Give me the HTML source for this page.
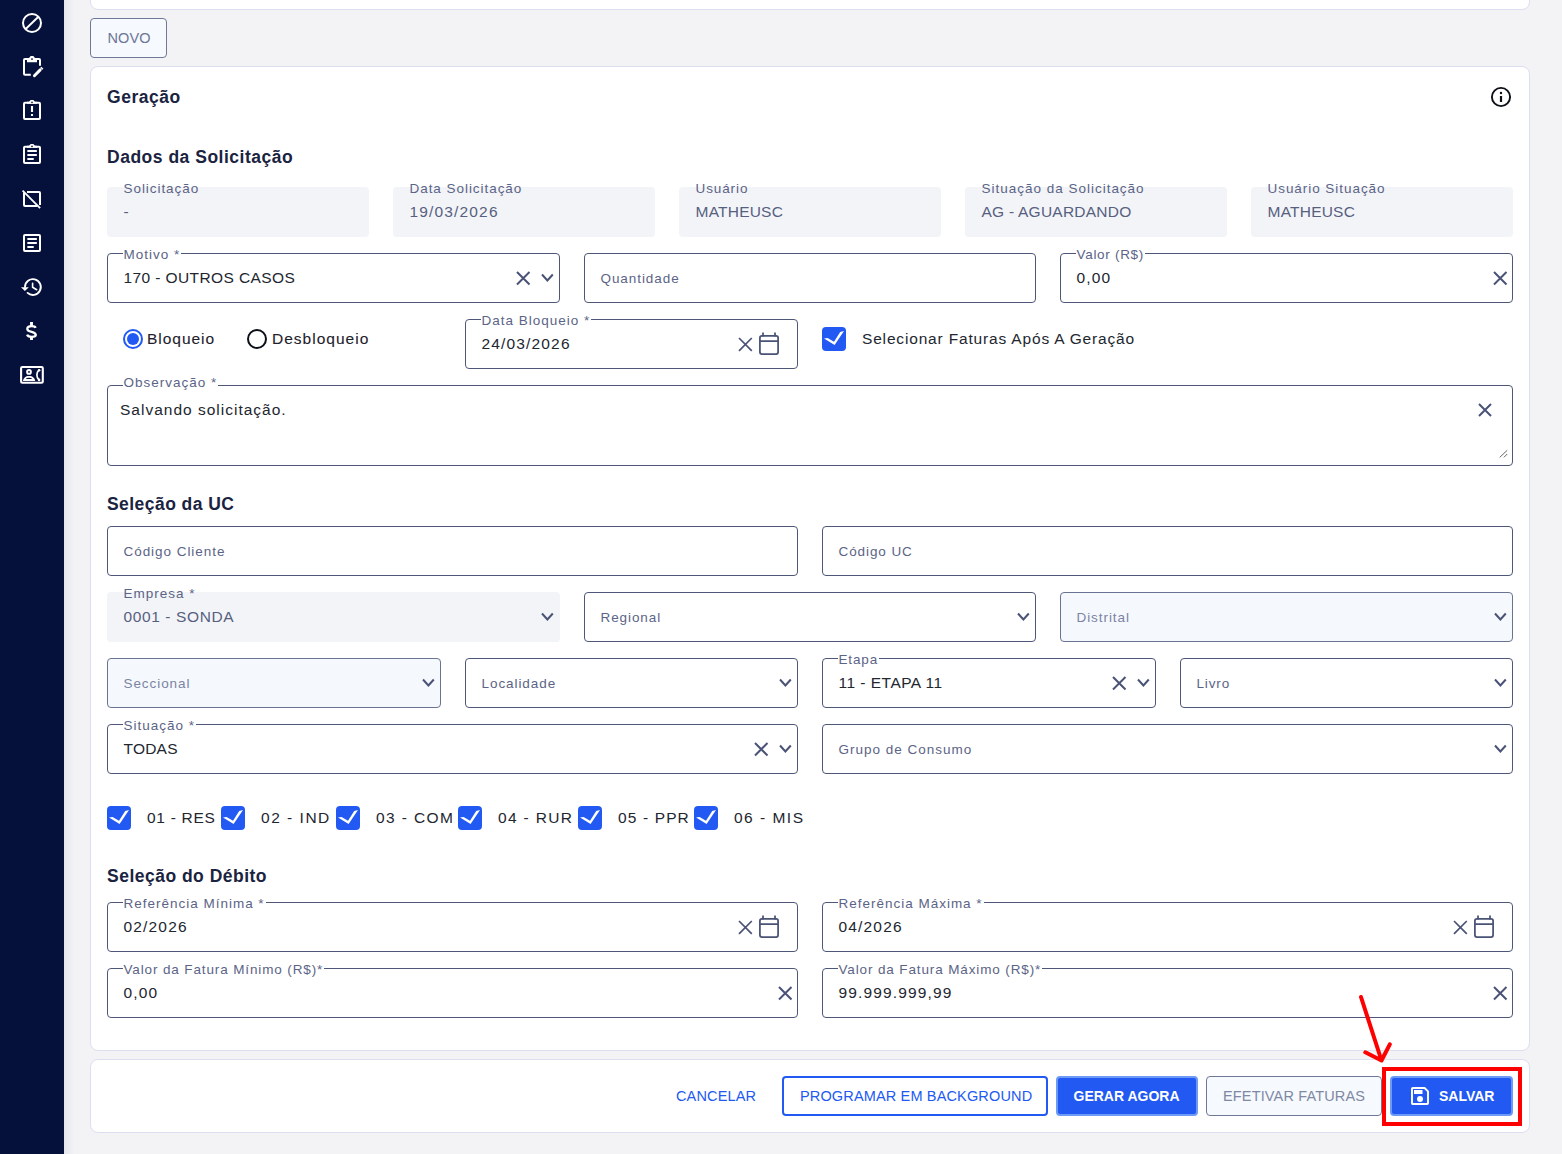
<!DOCTYPE html><html><head><meta charset="utf-8"><style>
*{margin:0;padding:0;box-sizing:border-box}
html,body{width:1562px;height:1154px;overflow:hidden;background:#f3f3f5;font-family:"Liberation Sans",sans-serif}
.abs{position:absolute}
.t{position:absolute;line-height:20px;white-space:nowrap}
.side{position:absolute;left:0;top:0;width:64px;height:1154px;background:#06113b}
.shadow{position:absolute;left:64px;top:0;width:10px;height:1154px;background:linear-gradient(90deg,#e4e6ec,#f3f3f5)}
.card{position:absolute;background:#fff;border:1px solid #dcdff0;border-radius:8px}
.box{position:absolute;border:1px solid #4f5779;border-radius:4px;background:#fff}
.ro{position:absolute;background:#f3f4f8;border-radius:4px}
.btn{position:absolute;border-radius:4px}
</style></head><body>

<div class="shadow"></div><div class="side">
<svg class="abs" style="left:20px;top:11px" width="24" height="24" viewBox="0 0 24 24"><circle cx="12" cy="12" r="9" stroke="#ffffff" stroke-width="2" fill="none"/><path d="M5.4 18.2L18.4 5.8" stroke="#ffffff" stroke-width="1.9"/></svg>
<svg class="abs" style="left:20px;top:54px" width="24" height="24" viewBox="0 0 24 24"><path d="M10.8 20.8H5A1 1 0 0 1 4 19.8V5.9A1 1 0 0 1 5 4.9H7.2M16.8 4.9H19A1 1 0 0 1 20 5.9V11.8" stroke="#ffffff" stroke-width="2" fill="none"/><path d="M7 4H9L10.7 2.1H13.3L15 4H17V8.2H7Z" fill="#ffffff"/><circle cx="12" cy="5.1" r="0.9" fill="#06113b"/><path d="M14.4 21.7L20.2 15.9" stroke="#ffffff" stroke-width="2.9" stroke-linecap="round"/><path d="M21.3 14.8L22.4 13.7" stroke="#ffffff" stroke-width="2.9"/></svg>
<svg class="abs" style="left:20px;top:98px" width="24" height="24" viewBox="0 0 24 24"><rect x="4" y="4.8" width="16" height="16.2" rx="1" stroke="#ffffff" stroke-width="2" fill="none"/><path d="M7 3.8H9L10.7 2H13.3L15 3.8H17V5.8H7Z" fill="#ffffff"/><circle cx="12" cy="4.4" r="0.8" fill="#06113b"/><path d="M12 8V14.1M12 16V18.1" stroke="#ffffff" stroke-width="2.1"/></svg>
<svg class="abs" style="left:20px;top:142px" width="24" height="24" viewBox="0 0 24 24"><rect x="4" y="4.8" width="16" height="16.2" rx="1" stroke="#ffffff" stroke-width="2" fill="none"/><path d="M7 3.8H9L10.7 2H13.3L15 3.8H17V5.8H7Z" fill="#ffffff"/><circle cx="12" cy="4.4" r="0.8" fill="#06113b"/><path d="M8.1 8.9H16.1M8.1 12.9H16.1M8.1 17H13" stroke="#ffffff" stroke-width="2" stroke-linecap="round"/></svg>
<svg class="abs" style="left:20px;top:187px" width="24" height="24" viewBox="0 0 24 24"><path d="M7 4.9H19A1 1 0 0 1 20 5.9V18.1M4 5.6V18A1 1 0 0 0 5 19H17.4" stroke="#ffffff" stroke-width="2" fill="none"/><path d="M2.6 3.6L20.1 21.2" stroke="#ffffff" stroke-width="1.9"/></svg>
<svg class="abs" style="left:20px;top:231px" width="24" height="24" viewBox="0 0 24 24"><rect x="4" y="4" width="16" height="15.9" rx="1" stroke="#ffffff" stroke-width="2" fill="none"/><path d="M8.1 8H16.1M8.1 12H16.1M8.1 16H13" stroke="#ffffff" stroke-width="2" stroke-linecap="round"/></svg>
<svg class="abs" style="left:20px;top:275px" width="24" height="24" viewBox="0 0 24 24"><path d="M5 12A7.9 7.9 0 1 1 7.6 17.9" stroke="#ffffff" stroke-width="1.9" fill="none" stroke-linecap="round"/><path d="M1 12.3H8.8L4.9 16Z" fill="#ffffff"/><path d="M12.6 8.2V12.3L16.7 14.7" stroke="#ffffff" stroke-width="1.6" fill="none" stroke-linecap="round"/></svg>
<svg class="abs" style="left:20px;top:319px" width="24" height="24" viewBox="0 0 24 24"><path d="M15.6 8.8C15.1 7.5 13.7 7.1 11.5 7.1C9.1 7.1 7.3 8.2 7.3 9.9C7.3 11.8 9.3 12.3 11.7 12.9C14.2 13.5 15.8 14.3 15.8 16.1C15.8 17.7 14 17.9 11.5 17.9C9.2 17.9 7.6 17.2 7.1 15.7" stroke="#ffffff" stroke-width="2.3" fill="none"/><path d="M11.5 2.9V7M11.5 17.9V20.9" stroke="#ffffff" stroke-width="2.9"/></svg>
<svg class="abs" style="left:19px;top:364px" width="26" height="22" viewBox="0 0 26 22"><rect x="2.1" y="3" width="21.7" height="15.8" rx="1.2" stroke="#ffffff" stroke-width="2.1" fill="none"/><circle cx="10" cy="7.9" r="1.9" stroke="#ffffff" stroke-width="1.9" fill="none"/><path d="M4 17.1C4.2 13.9 6.6 11.9 10.1 11.9C13.6 11.9 16 13.9 16.2 17.1Z" fill="#ffffff"/><ellipse cx="10" cy="14.4" rx="3" ry="0.7" fill="#06113b"/><path d="M20 6.2C18.6 7.4 17.9 9 17.9 11.1C17.9 13.2 18.6 14.8 20 16" stroke="#ffffff" stroke-width="1.7" fill="none"/><circle cx="20.1" cy="6.3" r="1.3" fill="#ffffff"/><circle cx="20.1" cy="15.9" r="1.3" fill="#ffffff"/></svg>
</div>
<div class="card" style="left:90px;top:-20px;width:1440px;height:30px"></div>
<div class="btn" style="left:90px;top:18px;width:77px;height:40px;border:1px solid #707898;background:#f6f9fd"></div>
<div class="t" style="left:107.5px;top:28px;font-size:14.5px;font-weight:normal;color:#6c7596;letter-spacing:0.10px;">NOVO</div>
<div class="card" style="left:90px;top:66px;width:1440px;height:985px"></div>
<div class="t" style="left:107px;top:87px;font-size:17.5px;font-weight:bold;color:#1a2340;letter-spacing:0.53px;">Geração</div>
<svg class="abs" style="left:1489px;top:85px" width="24" height="24" viewBox="0 0 24 24"><circle cx="12" cy="12" r="9.1" stroke="#0b0f17" stroke-width="1.9" fill="none"/><path d="M12 11V17" stroke="#0b0f17" stroke-width="2.2"/><circle cx="12" cy="8" r="1.2" fill="#0b0f17"/></svg>
<div class="t" style="left:107px;top:147px;font-size:17.5px;font-weight:bold;color:#1a2340;letter-spacing:0.51px;">Dados da Solicitação</div>
<div class="ro" style="left:107px;top:187px;width:262px;height:50px"></div>
<div class="t" style="left:123.5px;top:179px;font-size:13.5px;font-weight:normal;color:#5b6486;letter-spacing:0.94px;">Solicitação</div>
<div class="t" style="left:123.5px;top:202px;font-size:15.5px;font-weight:normal;color:#575f80;letter-spacing:0.00px;">-</div>
<div class="ro" style="left:393px;top:187px;width:262px;height:50px"></div>
<div class="t" style="left:409.5px;top:179px;font-size:13.5px;font-weight:normal;color:#5b6486;letter-spacing:0.95px;">Data Solicitação</div>
<div class="t" style="left:409.5px;top:202px;font-size:15.5px;font-weight:normal;color:#575f80;letter-spacing:1.16px;">19/03/2026</div>
<div class="ro" style="left:679px;top:187px;width:262px;height:50px"></div>
<div class="t" style="left:695.5px;top:179px;font-size:13.5px;font-weight:normal;color:#5b6486;letter-spacing:0.90px;">Usuário</div>
<div class="t" style="left:695.5px;top:202px;font-size:15.5px;font-weight:normal;color:#575f80;letter-spacing:0.22px;">MATHEUSC</div>
<div class="ro" style="left:965px;top:187px;width:262px;height:50px"></div>
<div class="t" style="left:981.5px;top:179px;font-size:13.5px;font-weight:normal;color:#5b6486;letter-spacing:0.99px;">Situação da Solicitação</div>
<div class="t" style="left:981.5px;top:202px;font-size:15.5px;font-weight:normal;color:#575f80;letter-spacing:0.24px;">AG - AGUARDANDO</div>
<div class="ro" style="left:1251px;top:187px;width:262px;height:50px"></div>
<div class="t" style="left:1267.5px;top:179px;font-size:13.5px;font-weight:normal;color:#5b6486;letter-spacing:0.95px;">Usuário Situação</div>
<div class="t" style="left:1267.5px;top:202px;font-size:15.5px;font-weight:normal;color:#575f80;letter-spacing:0.22px;">MATHEUSC</div>
<div class="box" style="left:107px;top:253px;width:453px;height:50px;"></div>
<div class="t" style="left:123.5px;top:245px;font-size:13.5px;font-weight:normal;color:#5b6486;letter-spacing:0.99px;background:#fff;padding:0 1px;margin-left:-1px;">Motivo *</div>
<div class="t" style="left:123.5px;top:268px;font-size:15.5px;font-weight:normal;color:#22262f;letter-spacing:0.40px;">170 - OUTROS CASOS</div>
<svg class="abs" style="left:514.75px;top:269.75px" width="16.5" height="16.5" viewBox="-8.25 -8.25 16.5 16.5"><path d="M-6.25 -6.25L6.25 6.25M6.25 -6.25L-6.25 6.25" stroke="#4a5376" stroke-width="2" fill="none"/></svg>
<svg class="abs" style="left:539.6px;top:272px" width="14.8" height="12" viewBox="-7.4 -6 14.8 12"><path d="M-5.4 -3.5L0 2.5L5.4 -3.5" stroke="#4a5376" stroke-width="2" fill="none"/></svg>
<div class="box" style="left:584px;top:253px;width:452px;height:50px;"></div>
<div class="t" style="left:600.5px;top:269px;font-size:13.5px;font-weight:normal;color:#5b6486;letter-spacing:0.93px;">Quantidade</div>
<div class="box" style="left:1060px;top:253px;width:453px;height:50px;"></div>
<div class="t" style="left:1076.5px;top:245px;font-size:13.5px;font-weight:normal;color:#5b6486;letter-spacing:0.70px;background:#fff;padding:0 1px;margin-left:-1px;">Valor (R$)</div>
<div class="t" style="left:1076.5px;top:268px;font-size:15.5px;font-weight:normal;color:#22262f;letter-spacing:1.13px;">0,00</div>
<svg class="abs" style="left:1491.75px;top:269.75px" width="16.5" height="16.5" viewBox="-8.25 -8.25 16.5 16.5"><path d="M-6.25 -6.25L6.25 6.25M6.25 -6.25L-6.25 6.25" stroke="#4a5376" stroke-width="2" fill="none"/></svg>
<svg class="abs" style="left:122px;top:328px" width="22" height="22" viewBox="0 0 22 22"><circle cx="11" cy="11" r="9" stroke="#2159f2" stroke-width="2" fill="#fff"/><circle cx="11" cy="11" r="6" fill="#2159f2"/></svg>
<div class="t" style="left:147px;top:329px;font-size:15.5px;font-weight:normal;color:#1d212b;letter-spacing:0.97px;-webkit-text-stroke:0.1px #1d212b">Bloqueio</div>
<svg class="abs" style="left:246px;top:328px" width="22" height="22" viewBox="0 0 22 22"><circle cx="11" cy="11" r="9" stroke="#0b0f17" stroke-width="2" fill="#fff"/></svg>
<div class="t" style="left:272px;top:329px;font-size:15.5px;font-weight:normal;color:#1d212b;letter-spacing:1.01px;-webkit-text-stroke:0.1px #1d212b">Desbloqueio</div>
<div class="box" style="left:465px;top:319px;width:333px;height:50px;"></div>
<div class="t" style="left:481.5px;top:311px;font-size:13.5px;font-weight:normal;color:#5b6486;letter-spacing:0.99px;background:#fff;padding:0 1px;margin-left:-1px;">Data Bloqueio *</div>
<div class="t" style="left:481.5px;top:334px;font-size:15.5px;font-weight:normal;color:#22262f;letter-spacing:1.16px;">24/03/2026</div>
<svg class="abs" style="left:736.6px;top:335.6px" width="16.8" height="16.8" viewBox="-8.4 -8.4 16.8 16.8"><path d="M-6.4 -6.4L6.4 6.4M6.4 -6.4L-6.4 6.4" stroke="#4a5376" stroke-width="1.7" fill="none"/></svg>
<svg class="abs" style="left:759px;top:332px" width="21" height="24" viewBox="0 0 21 24"><rect x="0.9" y="3.9" width="18.2" height="18.2" rx="2" stroke="#4a5376" stroke-width="1.75" fill="none"/><path d="M1 9H19M4 0.5V4.5M16 0.5V4.5" stroke="#4a5376" stroke-width="1.75" fill="none"/></svg>
<svg class="abs" style="left:822px;top:327px" width="24" height="24" viewBox="0 0 24 24"><rect x="0" y="0" width="24" height="24" rx="4" fill="#2159f2"/><path d="M2 11.4L5.6 11L12 14.8L18.2 5L22 4.1L12.6 18.1Z" fill="#fff"/></svg>
<div class="t" style="left:862px;top:329px;font-size:15.5px;font-weight:normal;color:#22262f;letter-spacing:0.83px;">Selecionar Faturas Após A Geração</div>
<div class="box" style="left:107px;top:385px;width:1406px;height:81px;"></div>
<div class="t" style="left:123.5px;top:373px;font-size:13.5px;font-weight:normal;color:#5b6486;letter-spacing:0.99px;background:#fff;padding:0 1px;margin-left:-1px;">Observação *</div>
<div class="t" style="left:120px;top:400px;font-size:15.5px;font-weight:normal;color:#22262f;letter-spacing:1.00px;">Salvando solicitação.</div>
<svg class="abs" style="left:1477.0px;top:402.0px" width="16" height="16" viewBox="-8.0 -8.0 16 16"><path d="M-6.0 -6.0L6.0 6.0M6.0 -6.0L-6.0 6.0" stroke="#4a5376" stroke-width="2" fill="none"/></svg>
<svg class="abs" style="left:1496px;top:448px" width="13" height="13" viewBox="0 0 13 13"><path d="M3.7 9.4L11.2 2.3M7.9 9.4L11.2 6" stroke="#666" stroke-width="1"/></svg>
<div class="t" style="left:107px;top:494px;font-size:17.5px;font-weight:bold;color:#1a2340;letter-spacing:0.45px;">Seleção da UC</div>
<div class="box" style="left:107px;top:526px;width:691px;height:50px;"></div>
<div class="t" style="left:123.5px;top:542px;font-size:13.5px;font-weight:normal;color:#5b6486;letter-spacing:0.95px;">Código Cliente</div>
<div class="box" style="left:822px;top:526px;width:691px;height:50px;"></div>
<div class="t" style="left:838.5px;top:542px;font-size:13.5px;font-weight:normal;color:#5b6486;letter-spacing:0.91px;">Código UC</div>
<div class="ro" style="left:107px;top:592px;width:453px;height:50px"></div>
<div class="t" style="left:123.5px;top:584px;font-size:13.5px;font-weight:normal;color:#5b6486;letter-spacing:0.99px;">Empresa *</div>
<div class="t" style="left:123.5px;top:607px;font-size:15.5px;font-weight:normal;color:#575f80;letter-spacing:0.61px;">0001 - SONDA</div>
<svg class="abs" style="left:539.6px;top:611px" width="14.8" height="12" viewBox="-7.4 -6 14.8 12"><path d="M-5.4 -3.5L0 2.5L5.4 -3.5" stroke="#4a5376" stroke-width="2" fill="none"/></svg>
<div class="box" style="left:584px;top:592px;width:452px;height:50px;"></div>
<div class="t" style="left:600.5px;top:608px;font-size:13.5px;font-weight:normal;color:#5b6486;letter-spacing:0.91px;">Regional</div>
<svg class="abs" style="left:1015.6px;top:611px" width="14.8" height="12" viewBox="-7.4 -6 14.8 12"><path d="M-5.4 -3.5L0 2.5L5.4 -3.5" stroke="#4a5376" stroke-width="2" fill="none"/></svg>
<div class="box" style="left:1060px;top:592px;width:453px;height:50px;background:#f5f8fd;border-color:#6b7392;"></div>
<div class="t" style="left:1076.5px;top:608px;font-size:13.5px;font-weight:normal;color:#7b84a3;letter-spacing:0.93px;">Distrital</div>
<svg class="abs" style="left:1492.6px;top:611px" width="14.8" height="12" viewBox="-7.4 -6 14.8 12"><path d="M-5.4 -3.5L0 2.5L5.4 -3.5" stroke="#4a5376" stroke-width="2" fill="none"/></svg>
<div class="box" style="left:107px;top:658px;width:334px;height:50px;background:#f5f8fd;border-color:#6b7392;"></div>
<div class="t" style="left:123.5px;top:674px;font-size:13.5px;font-weight:normal;color:#7b84a3;letter-spacing:0.93px;">Seccional</div>
<svg class="abs" style="left:420.6px;top:677px" width="14.8" height="12" viewBox="-7.4 -6 14.8 12"><path d="M-5.4 -3.5L0 2.5L5.4 -3.5" stroke="#4a5376" stroke-width="2" fill="none"/></svg>
<div class="box" style="left:465px;top:658px;width:333px;height:50px;"></div>
<div class="t" style="left:481.5px;top:674px;font-size:13.5px;font-weight:normal;color:#5b6486;letter-spacing:0.93px;">Localidade</div>
<svg class="abs" style="left:777.6px;top:677px" width="14.8" height="12" viewBox="-7.4 -6 14.8 12"><path d="M-5.4 -3.5L0 2.5L5.4 -3.5" stroke="#4a5376" stroke-width="2" fill="none"/></svg>
<div class="box" style="left:822px;top:658px;width:334px;height:50px;"></div>
<div class="t" style="left:838.5px;top:650px;font-size:13.5px;font-weight:normal;color:#5b6486;letter-spacing:0.85px;background:#fff;padding:0 1px;margin-left:-1px;">Etapa</div>
<div class="t" style="left:838.5px;top:673px;font-size:15.5px;font-weight:normal;color:#22262f;letter-spacing:0.48px;">11 - ETAPA 11</div>
<svg class="abs" style="left:1110.75px;top:674.75px" width="16.5" height="16.5" viewBox="-8.25 -8.25 16.5 16.5"><path d="M-6.25 -6.25L6.25 6.25M6.25 -6.25L-6.25 6.25" stroke="#4a5376" stroke-width="2" fill="none"/></svg>
<svg class="abs" style="left:1135.6px;top:677px" width="14.8" height="12" viewBox="-7.4 -6 14.8 12"><path d="M-5.4 -3.5L0 2.5L5.4 -3.5" stroke="#4a5376" stroke-width="2" fill="none"/></svg>
<div class="box" style="left:1180px;top:658px;width:333px;height:50px;"></div>
<div class="t" style="left:1196.5px;top:674px;font-size:13.5px;font-weight:normal;color:#5b6486;letter-spacing:0.85px;">Livro</div>
<svg class="abs" style="left:1492.6px;top:677px" width="14.8" height="12" viewBox="-7.4 -6 14.8 12"><path d="M-5.4 -3.5L0 2.5L5.4 -3.5" stroke="#4a5376" stroke-width="2" fill="none"/></svg>
<div class="box" style="left:107px;top:724px;width:691px;height:50px;"></div>
<div class="t" style="left:123.5px;top:716px;font-size:13.5px;font-weight:normal;color:#5b6486;letter-spacing:0.99px;background:#fff;padding:0 1px;margin-left:-1px;">Situação *</div>
<div class="t" style="left:123.5px;top:739px;font-size:15.5px;font-weight:normal;color:#22262f;letter-spacing:0.22px;">TODAS</div>
<svg class="abs" style="left:752.75px;top:740.75px" width="16.5" height="16.5" viewBox="-8.25 -8.25 16.5 16.5"><path d="M-6.25 -6.25L6.25 6.25M6.25 -6.25L-6.25 6.25" stroke="#4a5376" stroke-width="2" fill="none"/></svg>
<svg class="abs" style="left:777.6px;top:743px" width="14.8" height="12" viewBox="-7.4 -6 14.8 12"><path d="M-5.4 -3.5L0 2.5L5.4 -3.5" stroke="#4a5376" stroke-width="2" fill="none"/></svg>
<div class="box" style="left:822px;top:724px;width:691px;height:50px;"></div>
<div class="t" style="left:838.5px;top:740px;font-size:13.5px;font-weight:normal;color:#5b6486;letter-spacing:0.99px;">Grupo de Consumo</div>
<svg class="abs" style="left:1492.6px;top:743px" width="14.8" height="12" viewBox="-7.4 -6 14.8 12"><path d="M-5.4 -3.5L0 2.5L5.4 -3.5" stroke="#4a5376" stroke-width="2" fill="none"/></svg>
<svg class="abs" style="left:107px;top:806px" width="24" height="24" viewBox="0 0 24 24"><rect x="0" y="0" width="24" height="24" rx="4" fill="#2159f2"/><path d="M2 11.4L5.6 11L12 14.8L18.2 5L22 4.1L12.6 18.1Z" fill="#fff"/></svg>
<div class="t" style="left:147px;top:808px;font-size:15.5px;font-weight:normal;color:#22262f;letter-spacing:0.72px;">01 - RES</div>
<svg class="abs" style="left:221px;top:806px" width="24" height="24" viewBox="0 0 24 24"><rect x="0" y="0" width="24" height="24" rx="4" fill="#2159f2"/><path d="M2 11.4L5.6 11L12 14.8L18.2 5L22 4.1L12.6 18.1Z" fill="#fff"/></svg>
<div class="t" style="left:261px;top:808px;font-size:15.5px;font-weight:normal;color:#22262f;letter-spacing:1.51px;">02 - IND</div>
<svg class="abs" style="left:336px;top:806px" width="24" height="24" viewBox="0 0 24 24"><rect x="0" y="0" width="24" height="24" rx="4" fill="#2159f2"/><path d="M2 11.4L5.6 11L12 14.8L18.2 5L22 4.1L12.6 18.1Z" fill="#fff"/></svg>
<div class="t" style="left:376px;top:808px;font-size:15.5px;font-weight:normal;color:#22262f;letter-spacing:1.39px;">03 - COM</div>
<svg class="abs" style="left:458px;top:806px" width="24" height="24" viewBox="0 0 24 24"><rect x="0" y="0" width="24" height="24" rx="4" fill="#2159f2"/><path d="M2 11.4L5.6 11L12 14.8L18.2 5L22 4.1L12.6 18.1Z" fill="#fff"/></svg>
<div class="t" style="left:498px;top:808px;font-size:15.5px;font-weight:normal;color:#22262f;letter-spacing:1.33px;">04 - RUR</div>
<svg class="abs" style="left:578px;top:806px" width="24" height="24" viewBox="0 0 24 24"><rect x="0" y="0" width="24" height="24" rx="4" fill="#2159f2"/><path d="M2 11.4L5.6 11L12 14.8L18.2 5L22 4.1L12.6 18.1Z" fill="#fff"/></svg>
<div class="t" style="left:618px;top:808px;font-size:15.5px;font-weight:normal;color:#22262f;letter-spacing:1.13px;">05 - PPR</div>
<svg class="abs" style="left:694px;top:806px" width="24" height="24" viewBox="0 0 24 24"><rect x="0" y="0" width="24" height="24" rx="4" fill="#2159f2"/><path d="M2 11.4L5.6 11L12 14.8L18.2 5L22 4.1L12.6 18.1Z" fill="#fff"/></svg>
<div class="t" style="left:734px;top:808px;font-size:15.5px;font-weight:normal;color:#22262f;letter-spacing:1.49px;">06 - MIS</div>
<div class="t" style="left:107px;top:866px;font-size:17.5px;font-weight:bold;color:#1a2340;letter-spacing:0.49px;">Seleção do Débito</div>
<div class="box" style="left:107px;top:902px;width:691px;height:50px;"></div>
<div class="t" style="left:123.5px;top:894px;font-size:13.5px;font-weight:normal;color:#5b6486;letter-spacing:0.99px;background:#fff;padding:0 1px;margin-left:-1px;">Referência Mínima *</div>
<div class="t" style="left:123.5px;top:917px;font-size:15.5px;font-weight:normal;color:#22262f;letter-spacing:1.17px;">02/2026</div>
<svg class="abs" style="left:736.6px;top:918.6px" width="16.8" height="16.8" viewBox="-8.4 -8.4 16.8 16.8"><path d="M-6.4 -6.4L6.4 6.4M6.4 -6.4L-6.4 6.4" stroke="#4a5376" stroke-width="1.7" fill="none"/></svg>
<svg class="abs" style="left:759px;top:915px" width="21" height="24" viewBox="0 0 21 24"><rect x="0.9" y="3.9" width="18.2" height="18.2" rx="2" stroke="#4a5376" stroke-width="1.75" fill="none"/><path d="M1 9H19M4 0.5V4.5M16 0.5V4.5" stroke="#4a5376" stroke-width="1.75" fill="none"/></svg>
<div class="box" style="left:822px;top:902px;width:691px;height:50px;"></div>
<div class="t" style="left:838.5px;top:894px;font-size:13.5px;font-weight:normal;color:#5b6486;letter-spacing:0.99px;background:#fff;padding:0 1px;margin-left:-1px;">Referência Máxima *</div>
<div class="t" style="left:838.5px;top:917px;font-size:15.5px;font-weight:normal;color:#22262f;letter-spacing:1.17px;">04/2026</div>
<svg class="abs" style="left:1451.6px;top:918.6px" width="16.8" height="16.8" viewBox="-8.4 -8.4 16.8 16.8"><path d="M-6.4 -6.4L6.4 6.4M6.4 -6.4L-6.4 6.4" stroke="#4a5376" stroke-width="1.7" fill="none"/></svg>
<svg class="abs" style="left:1474px;top:915px" width="21" height="24" viewBox="0 0 21 24"><rect x="0.9" y="3.9" width="18.2" height="18.2" rx="2" stroke="#4a5376" stroke-width="1.75" fill="none"/><path d="M1 9H19M4 0.5V4.5M16 0.5V4.5" stroke="#4a5376" stroke-width="1.75" fill="none"/></svg>
<div class="box" style="left:107px;top:968px;width:691px;height:50px;"></div>
<div class="t" style="left:123.5px;top:960px;font-size:13.5px;font-weight:normal;color:#5b6486;letter-spacing:0.87px;background:#fff;padding:0 1px;margin-left:-1px;">Valor da Fatura Mínimo (R$)*</div>
<div class="t" style="left:123.5px;top:983px;font-size:15.5px;font-weight:normal;color:#22262f;letter-spacing:1.13px;">0,00</div>
<svg class="abs" style="left:776.75px;top:984.75px" width="16.5" height="16.5" viewBox="-8.25 -8.25 16.5 16.5"><path d="M-6.25 -6.25L6.25 6.25M6.25 -6.25L-6.25 6.25" stroke="#4a5376" stroke-width="2" fill="none"/></svg>
<div class="box" style="left:822px;top:968px;width:691px;height:50px;"></div>
<div class="t" style="left:838.5px;top:960px;font-size:13.5px;font-weight:normal;color:#5b6486;letter-spacing:0.87px;background:#fff;padding:0 1px;margin-left:-1px;">Valor da Fatura Máximo (R$)*</div>
<div class="t" style="left:838.5px;top:983px;font-size:15.5px;font-weight:normal;color:#22262f;letter-spacing:1.15px;">99.999.999,99</div>
<svg class="abs" style="left:1491.75px;top:984.75px" width="16.5" height="16.5" viewBox="-8.25 -8.25 16.5 16.5"><path d="M-6.25 -6.25L6.25 6.25M6.25 -6.25L-6.25 6.25" stroke="#4a5376" stroke-width="2" fill="none"/></svg>
<div class="card" style="left:90px;top:1059px;width:1440px;height:74px"></div>
<div class="t" style="left:676px;top:1086px;font-size:14.5px;font-weight:normal;color:#2159f2;letter-spacing:0.15px;">CANCELAR</div>
<div class="btn" style="left:782px;top:1076px;width:266px;height:40px;border:2px solid #2159f2;background:#fff"></div>
<div class="t" style="left:800px;top:1086px;font-size:14.5px;font-weight:normal;color:#2159f2;letter-spacing:0.15px;">PROGRAMAR EM BACKGROUND</div>
<div class="btn" style="left:1056px;top:1076px;width:142px;height:40px;border:2px solid #6d9af6;background:#2159f2"></div>
<div class="t" style="left:1073.5px;top:1086px;font-size:14px;font-weight:bold;color:#fff;letter-spacing:0.00px;">GERAR AGORA</div>
<div class="btn" style="left:1206px;top:1076px;width:176px;height:40px;border:1px solid #6f7896;background:#f6f9fd"></div>
<div class="t" style="left:1223px;top:1086px;font-size:14.5px;font-weight:normal;color:#8088a4;letter-spacing:0.15px;">EFETIVAR FATURAS</div>
<div class="btn" style="left:1390px;top:1076px;width:123px;height:40px;border:2px solid #6d9af6;background:#2159f2"></div>
<svg class="abs" style="left:1410px;top:1086px" width="20" height="20" viewBox="0 0 20 20"><path d="M2 2.8A0.8 0.8 0 0 1 2.8 2H14.6L18 5.4V17.2A0.8 0.8 0 0 1 17.2 18H2.8A0.8 0.8 0 0 1 2 17.2Z" stroke="#fff" stroke-width="1.9" fill="none" stroke-linejoin="round"/><rect x="4" y="4" width="8.5" height="4" fill="#fff"/><circle cx="10" cy="13" r="3" fill="#fff"/></svg>
<div class="t" style="left:1439px;top:1086px;font-size:14px;font-weight:bold;color:#fff;letter-spacing:0.00px;">SALVAR</div>
<div class="abs" style="left:1382px;top:1067px;width:140px;height:59px;border:4px solid #f00"></div>
<svg class="abs" style="left:0;top:0" width="1562" height="1154" viewBox="0 0 1562 1154"><path d="M1361 997L1381.5 1060.5M1365.3 1052.3L1381.5 1060.5L1389.8 1044.3" stroke="#f00" stroke-width="4" stroke-linecap="round" stroke-linejoin="round" fill="none"/></svg>
</body></html>
